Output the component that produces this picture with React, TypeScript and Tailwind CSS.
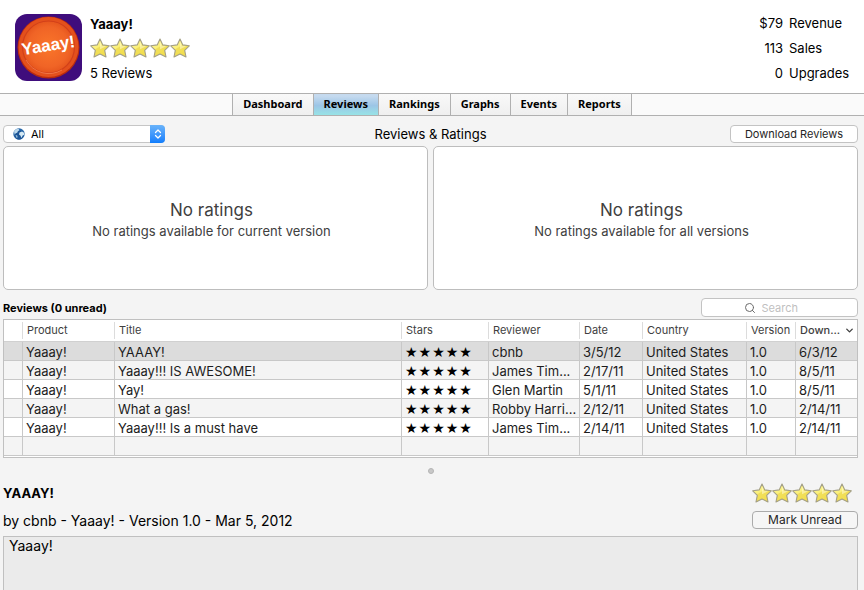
import { useState } from "react";
import { ChevronDown, ChevronsUpDown, Search } from "lucide-react";

type Review = {
  title: string;
  reviewer: string;
  date: string;
  downloaded: string;
};

const tabs = [
  "Dashboard",
  "Reviews",
  "Rankings",
  "Graphs",
  "Events",
  "Reports",
];

const stats = [
  { value: "$79", label: "Revenue" },
  { value: "113", label: "Sales" },
  { value: "0", label: "Upgrades" },
];

const reviews: Review[] = [
  { title: "YAAAY!", reviewer: "cbnb", date: "3/5/12", downloaded: "6/3/12" },
  {
    title: "Yaaay!!! IS AWESOME!",
    reviewer: "James Tim...",
    date: "2/17/11",
    downloaded: "8/5/11",
  },
  {
    title: "Yay!",
    reviewer: "Glen Martin",
    date: "5/1/11",
    downloaded: "8/5/11",
  },
  {
    title: "What a gas!",
    reviewer: "Robby Harri...",
    date: "2/12/11",
    downloaded: "2/14/11",
  },
  {
    title: "Yaaay!!! Is a must have",
    reviewer: "James Tim...",
    date: "2/14/11",
    downloaded: "2/14/11",
  },
];

const columns = [
  "Product",
  "Title",
  "Stars",
  "Reviewer",
  "Date",
  "Country",
  "Version",
];

const AppIcon = () => (
  <svg viewBox="0 0 67 67" className="size-[67px] shrink-0">
    <defs>
      <radialGradient id="disc" cx="50%" cy="50%" r="55%">
        <stop offset="0%" stopColor="#fa762a" />
        <stop offset="70%" stopColor="#f06426" />
        <stop offset="100%" stopColor="#e2501a" />
      </radialGradient>
    </defs>
    <rect width="67" height="67" rx="12" fill="#3f0d7c" />
    <circle cx="33.5" cy="33.5" r="31" fill="#b92c0e" />
    <circle cx="33.5" cy="33" r="30" fill="#e4501c" />
    <circle
      cx="33.5"
      cy="33"
      r="26"
      fill="url(#disc)"
      stroke="#d2401a"
      strokeWidth="1.2"
    />
    <path
      d="M11 46a26 26 0 0 0 36 10"
      fill="none"
      stroke="#f5814f"
      strokeWidth="0.8"
    />
    <text
      x="33.5"
      y="37"
      textAnchor="middle"
      transform="rotate(-9 33.5 33.5)"
      fill="#fff"
      fontFamily="Liberation Sans, sans-serif"
      fontWeight="700"
      fontSize="17"
    >
      Yaaay!
    </text>
  </svg>
);

const GoldStar = () => (
  <svg viewBox="0 0 20 20" className="size-5">
    <defs>
      <linearGradient id="gold" x1="0" y1="0" x2="0.6" y2="1">
        <stop offset="0%" stopColor="#fdf9a0" />
        <stop offset="50%" stopColor="#fbf07a" />
        <stop offset="55%" stopColor="#f0df5a" />
        <stop offset="100%" stopColor="#f3de4c" />
      </linearGradient>
    </defs>
    <path
      d="M10 1l2.800 5.900 6.500.900-4.600 4.500 1.300 6.700L10 16l-6 3 1.300-6.700L.7 7.800l6.500-.9z"
      fill="url(#gold)"
      stroke="#a39f85"
      strokeWidth="1.1"
      strokeLinejoin="round"
    />
    <path d="M10 3.500l1.800 4.200 4.500.6-6.300 3z" fill="#fffde0" opacity="0.5" />
  </svg>
);

const StarRating = () => (
  <div className="flex" role="img" aria-label="5 stars">
    {[1, 2, 3, 4, 5].map((n) => (
      <GoldStar key={n} />
    ))}
  </div>
);

const Globe = () => (
  <svg
    viewBox="0 0 12 12"
    className="pointer-events-none absolute left-2.5 top-[3px] size-3"
  >
    <circle cx="6" cy="6" r="5.7" fill="#2465a8" />
    <circle cx="6" cy="7" r="4.5" fill="#1d5596" />
    <path
      d="M1 3.500L3 1.200l2.600-.4.800 1.400-1.500 1-.7 1.600-1.500.4-1 1.500z"
      fill="#bcd9ec"
    />
    <path
      d="M6.500 4.500l2.500-1 2 1.200.300 2-1.600.800L8.500 10 7.400 7.600 6 6.500z"
      fill="#d5e9f3"
    />
    <path d="M2.500 7l1.700.6.400 1.400-.8 1.300z" fill="#9cc4df" />
  </svg>
);

const EmptyRatings = ({ text }: { text: string }) => (
  <section className="flex h-36 flex-1 flex-col items-center justify-center rounded-[5px] border border-[#bdbdbd] bg-white pr-2 pt-1.5 text-[#404040]">
    <h3 className="text-[17px] leading-[21px]">No ratings</h3>
    <p className="text-[13px] leading-[21px]">{text}</p>
  </section>
);

const cell =
  "h-[19px] border-b border-r border-[#c8c8c8] pl-[3px] pr-0 pt-0.5 leading-4 last:border-r-0";

const App = () => {
  const [activeTab, setActiveTab] = useState("Reviews");
  const [selected, setSelected] = useState(0);

  return (
    <div className="flex min-h-screen flex-col bg-[#f4f4f4] font-[Inter,sans-serif] text-[13px] text-black">
      {/* App summary */}
      <header className="flex items-start justify-between bg-white pb-[7px] pl-[15px] pr-4">
        <div className="flex gap-2 pt-3.5">
          <AppIcon />
          <div>
            <h1 className="font-bold leading-5">Yaaay!</h1>
            <div className="py-1">
              <StarRating />
            </div>
            <p className="leading-[22px]">5 Reviews</p>
          </div>
        </div>
        <dl className="pt-[11px] leading-[25px]">
          {stats.map(({ value, label }) => (
            <div key={label} className="flex gap-1.5">
              <dt className="order-2 w-[59px]">{label}</dt>
              <dd className="flex-1 text-right">{value}</dd>
            </div>
          ))}
        </dl>
      </header>

      {/* Tabs */}
      <nav className="flex justify-center border-y border-[#b0b0b0] bg-[#fafafa]">
        <div className="flex border-l border-[#b0b0b0]">
          {tabs.map((tab) => (
            <button
              key={tab}
              onClick={() => setActiveTab(tab)}
              className={`h-[21px] border-r border-[#b0b0b0] px-2.5 pb-0.5 font-['Noto_Sans',sans-serif] text-[11px] font-bold leading-[19px] ${
                activeTab === tab
                  ? "bg-linear-to-b from-[#c5daef] from-10% via-[#9cc5e6] via-55% to-[#97e3e6]"
                  : "bg-linear-to-b from-[#f9f9f9] to-[#efefef]"
              }`}
            >
              {tab}
            </button>
          ))}
        </div>
      </nav>

      <main className="flex flex-1 flex-col pl-[3px] pr-1.5">
        {/* Toolbar */}
        <div className="grid grid-cols-[1fr_auto_1fr] items-center pb-[3px] pt-[9px]">
          <div className="relative h-[18px] w-[162px]">
            <select
              aria-label="Country"
              className="block h-[18px] w-full appearance-none rounded-[4px] border border-[#c6c6c6] bg-white pb-px pl-[27px] text-[11px] leading-4"
            >
              <option>All</option>
            </select>
            <Globe />
            <span className="pointer-events-none absolute inset-y-0 right-0 flex w-[15px] items-center justify-center rounded-r-[4px] bg-linear-to-b from-[#69b3fa] to-[#0d7dfc] text-white">
              <ChevronsUpDown size={12} strokeWidth={2.5} />
            </span>
          </div>
          <h2 className="leading-[18px]">Reviews &amp; Ratings</h2>
          <button className="h-[18px] w-32 justify-self-end rounded-[4px] border border-[#c3c3c3] bg-white text-[11px] leading-4 text-[#262626]">
            Download Reviews
          </button>
        </div>

        {/* Ratings */}
        <div className="flex gap-[5px]">
          <EmptyRatings text="No ratings available for current version" />
          <EmptyRatings text="No ratings available for all versions" />
        </div>

        {/* Reviews list */}
        <div className="flex items-end justify-between pb-0.5 pt-2">
          <h2 className="text-[11px] font-bold leading-[18px]">
            Reviews (0 unread)
          </h2>
          <div className="flex h-[19px] w-[157px] items-center justify-center gap-1.5 rounded-[4px] border border-[#c3c3c3] bg-white">
            <Search size={12} strokeWidth={2} className="text-[#6b6b6b]" />
            <input
              type="text"
              aria-label="Search reviews"
              placeholder="Search"
              className="w-[54px] text-[11px] leading-4 placeholder-[#bfbfbf] outline-none"
            />
          </div>
        </div>

        <div className="border border-[#c0c0c0] bg-white pb-px">
          <table className="w-full table-fixed border-separate border-spacing-0">
            <colgroup>
              <col className="w-[19px]" />
              <col className="w-[92px]" />
              <col />
              <col className="w-[87px]" />
              <col className="w-[91px]" />
              <col className="w-[63px]" />
              <col className="w-[104px]" />
              <col className="w-[49px]" />
              <col className="w-[61px]" />
            </colgroup>
            <thead>
              <tr className="text-left text-[11px] text-[#404040]">
                <th className="border-b border-[#d0d0d0] py-0.5">
                  <div className="h-[17px] border-r border-[#dcdcdc]" />
                </th>
                {columns.map((name) => (
                  <th
                    key={name}
                    className="border-b border-[#d0d0d0] py-0.5 font-normal"
                  >
                    <div className="h-[17px] border-r border-[#dcdcdc] pl-1 leading-[17px]">
                      {name}
                    </div>
                  </th>
                ))}
                <th className="border-b border-[#d0d0d0] py-0.5 font-medium">
                  <div className="flex h-[17px] items-center justify-between pl-1 pr-0.5">
                    Down...
                    <ChevronDown size={11} strokeWidth={3} />
                  </div>
                </th>
              </tr>
            </thead>
            <tbody className="text-[#1c1c1c]">
              {reviews.map((review, i) => (
                <tr
                  key={i}
                  onClick={() => setSelected(i)}
                  className={
                    selected === i
                      ? "bg-[#dcdcdc]"
                      : "odd:bg-white even:bg-[#f4f4f4]"
                  }
                >
                  <td className={cell} />
                  <td className={cell}>Yaaay!</td>
                  <td className={cell}>{review.title}</td>
                  <td className={cell}>
                    <div className="flex gap-px font-['DejaVu_Sans',sans-serif] text-sm leading-4 text-black">
                      {[1, 2, 3, 4, 5].map((n) => (
                        <span key={n}>★</span>
                      ))}
                    </div>
                  </td>
                  <td className={`${cell} whitespace-nowrap`}>
                    {review.reviewer}
                  </td>
                  <td className={cell}>{review.date}</td>
                  <td className={cell}>United States</td>
                  <td className={cell}>1.0</td>
                  <td className={cell}>{review.downloaded}</td>
                </tr>
              ))}
              <tr className="bg-[#f4f4f4]">
                {[...columns, "marker", "downloaded"].map((name) => (
                  <td key={name} className={cell} />
                ))}
              </tr>
            </tbody>
          </table>
        </div>

        {/* Split handle */}
        <div className="flex h-[25px] items-center justify-center">
          <span className="size-1.5 rounded-full border border-[#b4b4b4] bg-[#c8c8c8]" />
        </div>

        {/* Selected review */}
        <div className="flex justify-between">
          <div>
            <h2 className="font-bold leading-5">{reviews[selected].title}</h2>
            <p className="pt-2 text-sm leading-5">
              by cbnb - Yaaay! - Version 1.0 - Mar 5, 2012
            </p>
          </div>
          <div className="flex w-[106px] flex-col gap-2">
            <StarRating />
            <button className="h-[18px] rounded-[4px] border border-[#ababab] bg-[#f6f6f6] text-xs leading-4 text-[#262626]">
              Mark Unread
            </button>
          </div>
        </div>
        <textarea
          readOnly
          aria-label="Review text"
          value="Yaaay!"
          className="mt-[5px] flex-1 resize-none border border-b-0 border-[#c0c0c0] bg-[#ebebeb] px-[5px] text-sm leading-[18px] outline-none"
        />
      </main>
    </div>
  );
};

export default App;
